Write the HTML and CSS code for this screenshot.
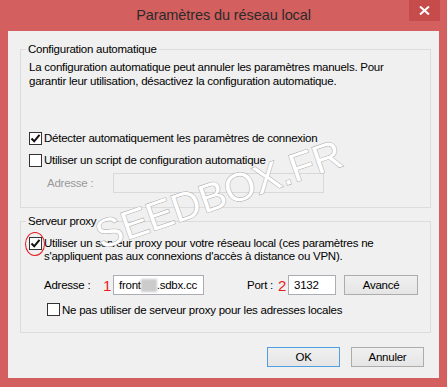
FILE: index.html
```html
<!DOCTYPE html>
<html lang="fr">
<head>
<meta charset="utf-8">
<title>Paramètres du réseau local</title>
<link rel="stylesheet" href="styles.css">
</head>
<body>
<div class="window">
  <div class="titlebar">
    <span class="spacer"></span>
    <span class="title">Paramètres du réseau local</span>
    <span class="close-wrap">
      <span class="close">
        <svg width="11" height="9" viewBox="0 0 11 9"><path d="M1 0.5 L10 8.5 M10 0.5 L1 8.5" stroke="#fff" stroke-width="2" fill="none"/></svg>
      </span>
    </span>
  </div>
  <div class="client">
    <fieldset class="group g1">
      <legend>Configuration automatique</legend>
      <p class="desc">La configuration automatique peut annuler les paramètres manuels. Pour<br>garantir leur utilisation, désactivez la configuration automatique.</p>
      <div class="check-row first">
        <span class="cb"><svg width="11" height="11" viewBox="0 0 11 11"><path d="M1.5 5.5 L4.2 8.3 L9.5 1.8" stroke="#111" stroke-width="2" fill="none"/></svg></span>
        <span>Détecter automatiquement les paramètres de connexion</span>
      </div>
      <div class="check-row">
        <span class="cb"></span>
        <span>Utiliser un script de configuration automatique</span>
      </div>
      <div class="addr-row">
        <span class="dis-lbl">Adresse :</span>
        <span class="field disabled"></span>
      </div>
    </fieldset>
    <fieldset class="group g2">
      <legend>Serveur proxy</legend>
      <div class="check-row multi">
        <span class="cb circled"><svg width="11" height="11" viewBox="0 0 11 11"><path d="M1.5 5.5 L4.2 8.3 L9.5 1.8" stroke="#111" stroke-width="2" fill="none"/></svg><span class="ring"></span></span>
        <span class="multi-text">Utiliser un serveur proxy pour votre réseau local (ces paramètres ne<br>s'appliquent pas aux connexions d'accès à distance ou VPN).</span>
      </div>
      <div class="proxy-row">
        <span class="plbl">Adresse :</span>
        <span class="num">1</span>
        <span class="field addr"><span class="ftext">front<span class="blur"></span>.sdbx.cc</span></span>
        <span class="port-lbl">Port :</span>
        <span class="num">2</span>
        <span class="field port"><span class="ftext">3132</span></span>
        <button class="btn adv">Avancé</button>
      </div>
      <div class="check-row local">
        <span class="cb"></span>
        <span>Ne pas utiliser de serveur proxy pour les adresses locales</span>
      </div>
    </fieldset>
    <div class="buttons">
      <button class="btn default">OK</button>
      <button class="btn">Annuler</button>
    </div>
  </div>
</div>
<div class="watermark">SEEDBOX.FR</div>
</body>
</html>
```

FILE: styles.css
```css
html, body {
  margin: 0;
  padding: 0;
}
body {
  width: 447px;
  height: 387px;
  background: #d35f5f;
  font-family: "Liberation Sans", Arial, sans-serif;
  font-size: 11.5px;
  letter-spacing: -0.25px;
  color: #000;
  position: relative;
  overflow: hidden;
}
.window {
  display: flex;
  flex-direction: column;
  height: 387px;
}
.titlebar {
  display: grid;
  grid-template-columns: 38px 1fr 38px;
  height: 31px;
}
.title {
  text-align: center;
  font-size: 14.5px;
  letter-spacing: -0.1px;
  line-height: 30px;
  color: #2b2b2b;
}
.close {
  display: flex;
  align-items: center;
  justify-content: center;
  width: 31px;
  height: 21px;
  background: #c64b4b;
}
.client {
  margin: 0 8px;
  height: 347px;
  background: #f0f0f0;
  padding: 0 8px 0 12px;
  display: flex;
  flex-direction: column;
}
.group {
  margin: 0;
  padding: 0 0 0 8px;
  border: 1px solid #dcdcdc;
  min-width: 0;
}
.group legend {
  padding: 0 2px;
  margin-left: -3px;
  line-height: 14px;
}
.g1 {
  margin-top: 11px;
  padding-bottom: 14px;
}
.g2 {
  margin-top: 6px;
  padding-bottom: 16px;
}
.desc {
  margin: 4px 0 0;
  line-height: 14px;
}
.check-row {
  display: flex;
  align-items: center;
  gap: 2px;
  height: 22px;
}
.check-row.first {
  margin-top: 39px;
}
.cb {
  position: relative;
  box-sizing: border-box;
  width: 13px;
  height: 13px;
  flex: none;
  border: 1px solid #333;
  background: #fff;
  display: flex;
  align-items: center;
  justify-content: center;
}
.addr-row {
  margin-top: 2px;
  display: flex;
  align-items: center;
  height: 20px;
  padding-left: 18px;
}
.dis-lbl {
  width: 66px;
  color: #9a9a9a;
}
.field {
  box-sizing: border-box;
  height: 20px;
  border: 1px solid #abadb3;
  background: #fff;
  overflow: hidden;
  white-space: nowrap;
  display: flex;
  align-items: center;
}
.field.disabled {
  width: 211px;
  border-color: #d9d9d9;
  background: #f0f0f0;
}
.check-row.multi {
  margin-top: 9px;
  height: auto;
  align-items: flex-start;
}
.multi-text {
  line-height: 13px;
}
.ring {
  position: absolute;
  left: -5px;
  top: -6px;
  width: 18px;
  height: 22px;
  border: 1.5px solid #e8141c;
  border-radius: 50%;
}
.proxy-row {
  margin-top: 12px;
  display: flex;
  align-items: center;
  height: 20px;
  padding-left: 15px;
}
.plbl {
  width: 59px;
}
.num {
  width: 10px;
  color: #e8201a;
  font-size: 15px;
}
.field.addr {
  width: 91px;
}
.ftext {
  padding-left: 5px;
  display: flex;
  align-items: center;
}
.blur {
  display: inline-block;
  width: 16px;
  height: 13px;
  background: #cbcbcb;
  filter: blur(1.2px);
}
.port-lbl {
  margin-left: 43px;
  width: 31px;
}
.field.port {
  width: 48px;
}
.btn {
  box-sizing: border-box;
  width: 73px;
  height: 20px;
  padding: 0;
  border: 1px solid #acacac;
  background: linear-gradient(#f0f0f0, #e5e5e5);
  font-family: inherit;
  font-size: 11.5px;
  letter-spacing: -0.25px;
  color: #000;
}
.btn.adv {
  margin-left: 8px;
  width: 74px;
}
.check-row.local {
  margin-top: 8px;
  height: 13px;
  padding-left: 18px;
}
.buttons {
  margin-top: 14px;
  display: flex;
  justify-content: flex-end;
  gap: 11px;
  padding-right: 7px;
}
.btn.default {
  border-color: #4f9ee3;
}
.watermark {
  position: absolute;
  left: -5px;
  top: 172px;
  width: 447px;
  text-align: center;
  font-family: "Liberation Sans", Arial, sans-serif;
  font-size: 40px;
  letter-spacing: 0;
  line-height: 44px;
  color: #fff;
  -webkit-text-stroke: 1px #a8a8a8;
  paint-order: stroke fill;
  transform: rotate(-19deg);
}
```
